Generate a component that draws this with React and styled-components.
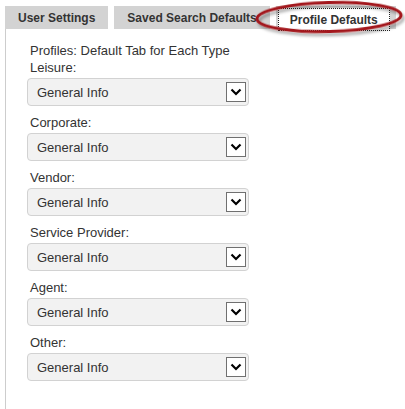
import React from "react";
import styled, { createGlobalStyle } from "styled-components";

const GlobalStyle = createGlobalStyle`
    html, body {
        margin: 0;
        padding: 0;
        background: #fff;
        font-family: "Liberation Sans", Arial, sans-serif;
    }
`;

const Page = styled.div`
    position: relative;
    width: 405px;
    height: 409px;
    overflow: hidden;
    padding: 6px 0 0 5px;
    box-sizing: border-box;
`;

const TabBar = styled.div`
    display: flex;
    gap: 6px;
    height: 23px;
`;

const Tab = styled.div`
    display: flex;
    align-items: center;
    padding: ${p => (p.$active ? "2px 6px 0 2px" : "0 13px")};
    background: #d3d3d3;
    color: #333;
    font-size: 12px;
    font-weight: bold;
    white-space: nowrap;
    box-sizing: border-box;
`;

const ActiveLink = styled.span`
    display: flex;
    align-items: center;
    align-self: stretch;
    margin-bottom: -2px;
    padding: 0 12px;
    background: #fff;
    outline: 1px dotted #222;
    outline-offset: -1px;
`;

const Panel = styled.div`
    border-left: 1px solid #cdcdcd;
    height: 380px;
    padding: 13px 0 0 21px;
    box-sizing: border-box;
    color: #333;
    font-size: 13px;
`;

const Heading = styled.div`
    line-height: 17px;
    padding-left: 3px;
`;

const Label = styled.div`
    line-height: 17px;
    padding-left: 3px;
    margin-bottom: 2px;
`;

const Group = styled.div`
    margin-bottom: 8px;
`;

const Select = styled.div`
    display: flex;
    align-items: center;
    justify-content: space-between;
    width: 222px;
    height: 28px;
    padding: 0 2px 0 9px;
    box-sizing: border-box;
    background: #f2f2f2;
    border: 1px solid #d2d2d2;
    border-radius: 4px;
    color: #333;
`;

const Arrow = styled.span`
    display: flex;
    align-items: center;
    justify-content: center;
    width: 20px;
    height: 20px;
    box-sizing: border-box;
    border: 1px solid #707070;
    background: #fff;
`;

const Highlight = styled.svg`
    position: absolute;
    left: 250px;
    top: 0;
    overflow: visible;
    pointer-events: none;
`;

const types = ["Leisure", "Corporate", "Vendor", "Service Provider", "Agent", "Other"];

function Chevron() {
    return (
        <svg width="12" height="8" viewBox="0 0 12 8">
            <polyline points="1.5,1.5 6,6 10.5,1.5" fill="none" stroke="#000" strokeWidth="2.2" />
        </svg>
    );
}

export default function App() {
    return (
        <Page>
            <GlobalStyle />
            <TabBar>
                <Tab>User Settings</Tab>
                <Tab>Saved Search Defaults</Tab>
                <Tab $active>
                    <ActiveLink>Profile Defaults</ActiveLink>
                </Tab>
            </TabBar>
            <Panel>
                <Heading>Profiles: Default Tab for Each Type</Heading>
                {types.map(t => (
                    <Group key={t}>
                        <Label>{t}:</Label>
                        <Select>
                            General Info
                            <Arrow><Chevron /></Arrow>
                        </Select>
                    </Group>
                ))}
            </Panel>
            <Highlight width="156" height="40" viewBox="0 0 156 40">
                <defs>
                    <filter id="shadow" x="-10%" y="-30%" width="120%" height="180%">
                        <feDropShadow dx="2" dy="3" stdDeviation="1.5" floodColor="#000" floodOpacity="0.35" />
                    </filter>
                </defs>
                <ellipse cx="79" cy="17" rx="72" ry="14.5" fill="none" stroke="#a3191b" strokeWidth="3" transform="rotate(-1.5 79 17)" filter="url(#shadow)" />
            </Highlight>
        </Page>
    );
}
